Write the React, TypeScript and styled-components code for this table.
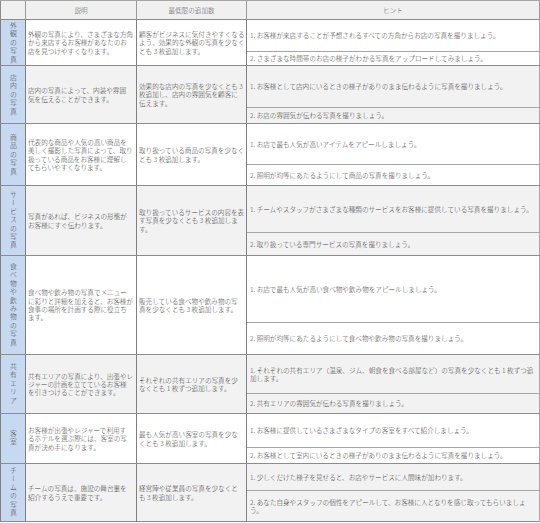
import styled, { createGlobalStyle } from "styled-components";

type Section = {
  label: string;
  desc: string;
  min: string;
  hints: [string, string];
  rows: [number, number];
};

const sections: Section[] = [
  {
    label: "外観の写真",
    desc: "外観の写真により、さまざまな方角\nから来店するお客様があなたのお\n店を見つけやすくなります。",
    min: "顧客がビジネスに気付きやすくなる\nよう、効果的な外観の写真を少なく\nとも 3 枚追加します。",
    hints: [
      "お客様が来店することが予想されるすべての方角からお店の写真を撮りましょう。",
      "さまざまな時間帯のお店の様子がわかる写真をアップロードしてみましょう。",
    ],
    rows: [32, 13],
  },
  {
    label: "店内の写真",
    desc: "店内の写真によって、内装や雰囲\n気を伝えることができます。",
    min: "効果的な店内の写真を少なくとも 3\n枚追加し、店内の雰囲気を顧客に\n伝えます。",
    hints: [
      "お客様として店内にいるときの様子がありのまま伝わるように写真を撮りましょう。",
      "お店の雰囲気が伝わる写真を撮りましょう。",
    ],
    rows: [42, 15],
  },
  {
    label: "商品の写真",
    desc: "代表的な商品や人気の高い商品を\n美しく撮影した写真によって、取り\n扱っている商品をお客様に理解し\nてもらいやすくなります。",
    min: "取り扱っている商品の写真を少なく\nとも 3 枚追加します。",
    hints: [
      "お店で最も人気が高いアイテムをアピールしましょう。",
      "照明が均等にあたるようにして商品の写真を撮りましょう。",
    ],
    rows: [41, 20],
  },
  {
    label: "サービスの写真",
    desc: "写真があれば、ビジネスの形態が\nお客様にすぐ伝わります。",
    min: "取り扱っているサービスの内容を表\nす写真を少なくとも 3 枚追加しま\nす。",
    hints: [
      "チームやスタッフがさまざまな種類のサービスをお客様に提供している写真を撮りましょう。",
      "取り扱っている専門サービスの写真を撮りましょう。",
    ],
    rows: [47, 22],
  },
  {
    label: "食べ物や飲み物の写真",
    desc: "食べ物や飲み物の写真でメニュー\nに彩りと詳細を加えると、お客様が\n食事の場所を計画する際に役立ち\nます。",
    min: "販売している食べ物や飲み物の写\n真を少なくとも 3 枚追加します。",
    hints: [
      "お店で最も人気が高い食べ物や飲み物をアピールしましょう。",
      "照明が均等にあたるようにして食べ物や飲み物の写真を撮りましょう。",
    ],
    rows: [67, 31],
  },
  {
    label: "共有エリア",
    desc: "共有エリアの写真により、出張やレ\nジャーの計画を立てているお客様\nを引きつけることができます。",
    min: "それぞれの共有エリアの写真を少\nなくとも 1 枚ずつ追加します。",
    hints: [
      "それぞれの共有エリア（温泉、ジム、朝食を食べる部屋など）の写真を少なくとも 1 枚ずつ追\n加します。",
      "共有エリアの雰囲気が伝わる写真を撮りましょう。",
    ],
    rows: [39, 19],
  },
  {
    label: "客室",
    desc: "お客様が出張やレジャーで利用す\nるホテルを選ぶ際には、客室の写\n真が決め手になります。",
    min: "最も人気が高い客室の写真を少な\nくとも 3 枚追加します。",
    hints: [
      "お客様に提供しているさまざまなタイプの客室をすべて紹介しましょう。",
      "お客様として室内にいるときの様子がありのまま伝わるように写真を撮りましょう。",
    ],
    rows: [34, 15],
  },
  {
    label: "チームの写真",
    desc: "チームの写真は、施設の舞台裏を\n紹介するうえで重要です。",
    min: "経営陣や従業員の写真を少なくと\nも 3 枚追加します。",
    hints: [
      "少しくだけた様子を見せると、お店やサービスに人間味が加わります。",
      "あなた自身やスタッフの個性をアピールして、お客様に人となりを感じ取ってもらいましょう。",
    ],
    rows: [27, 30],
  },
];

const App = () => {
  return (
    <>
      <GlobalStyle />
      <Table>
        <HeaderRow>
          <HeadCell />
          <HeadCell>説明</HeadCell>
          <HeadCell>最低限の追加数</HeadCell>
          <HeadCell>ヒント</HeadCell>
        </HeaderRow>
        {sections.map((section, index) => (
          <SectionRow key={section.label} $rows={section.rows} $shaded={index % 2 === 1}>
            <Category>
              <VerticalLabel>{section.label}</VerticalLabel>
            </Category>
            <TextCell>{section.desc}</TextCell>
            <TextCell>{section.min}</TextCell>
            {section.hints.map((hint, i) => (
              <HintCell key={i} $last={i === 1}>
                {`${i + 1}. ${hint}`}
              </HintCell>
            ))}
          </SectionRow>
        ))}
      </Table>
    </>
  );
};

export default App;

const GlobalStyle = createGlobalStyle`
  body {
    margin: 0;
    background: #ffffff;
    font-family: "Noto Sans CJK JP", "Noto Sans", sans-serif;
  }
  * {
    box-sizing: border-box;
  }
`;

const Table = styled.div`
  width: 540px;
  border-top: 1px solid #a6a6a6;
  font-size: 6.6px;
  line-height: 8.3px;
  font-weight: 300;
  color: #444444;
`;

const HeaderRow = styled.div`
  display: grid;
  grid-template-columns: 26px 111px 110px 1fr;
  height: 19px;
  background: #f0f0f0;
  border-bottom: 1px solid #8c8c8c;
`;

const HeadCell = styled.div`
  display: flex;
  align-items: center;
  justify-content: center;
  color: #5a5a5a;
  border-right: 1px solid #9a9a9a;
  &:first-child {
    border-left: 1px solid #8c8c8c;
  }
`;

const SectionRow = styled.div<{ $rows: [number, number]; $shaded: boolean }>`
  display: grid;
  grid-template-columns: 26px 111px 110px 1fr;
  grid-template-rows: ${({ $rows }) => `${$rows[0]}px ${$rows[1]}px`};
  background: ${({ $shaded }) => ($shaded ? "#f2f2f2" : "#ffffff")};
  border-bottom: 1px solid #8c8c8c;
`;

const Category = styled.div`
  grid-row: 1 / 3;
  display: flex;
  align-items: center;
  justify-content: center;
  background: #c6d9f1;
  border-left: 1px solid #7f7f7f;
  border-right: 1px solid #7f7f7f;
`;

const VerticalLabel = styled.span`
  writing-mode: vertical-rl;
  text-orientation: upright;
  font-size: 6.8px;
  line-height: 1;
  letter-spacing: 1.6px;
  color: #454545;
`;

const TextCell = styled.div`
  grid-row: 1 / 3;
  display: flex;
  align-items: center;
  padding: 0 1px 0 2px;
  white-space: pre-line;
  border-right: 1px solid #7f7f7f;
`;

const HintCell = styled.div<{ $last: boolean }>`
  grid-column: 4;
  display: flex;
  align-items: center;
  padding: 0 3px;
  white-space: pre-line;
  border-right: 1px solid #a6a6a6;
  border-bottom: ${({ $last }) => ($last ? "none" : "1px solid #a6a6a6")};
`;
